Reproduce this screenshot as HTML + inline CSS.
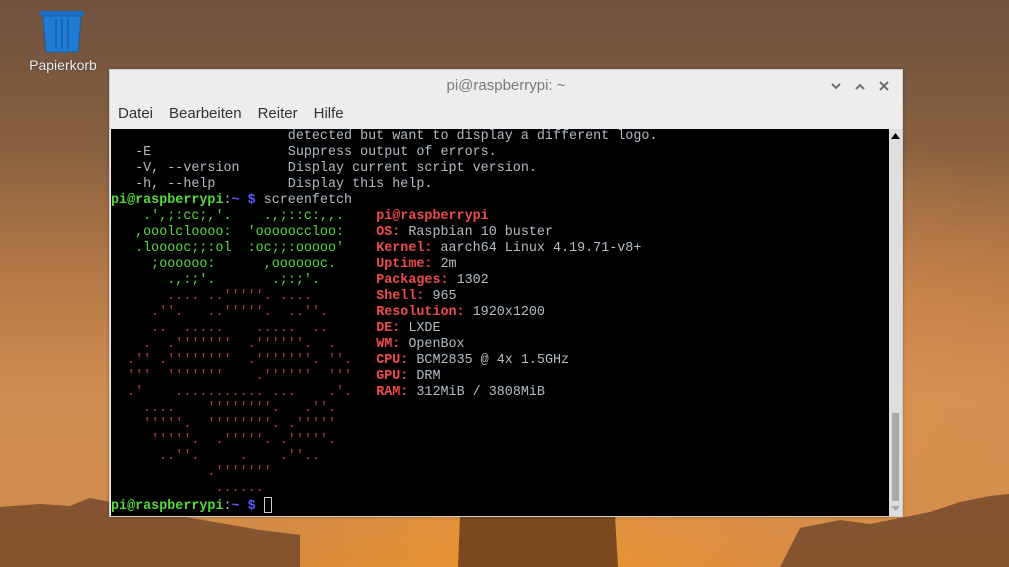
<!DOCTYPE html>
<html><head><meta charset="utf-8"><style>
*{margin:0;padding:0;box-sizing:border-box}
html,body{width:1009px;height:567px;overflow:hidden}
body{position:relative;font-family:"Liberation Sans",sans-serif;
background:
radial-gradient(ellipse 500px 260px at 720px 380px,rgba(235,150,80,.55),rgba(0,0,0,0)),
radial-gradient(ellipse 260px 120px at 530px 567px,rgba(240,150,40,.8),rgba(0,0,0,0)),
linear-gradient(180deg,#6f513f 0%,#86603f 25%,#b77a48 50%,#cf8d52 70%,#d08c4c 88%,#d88a3c 100%);}
.bot{position:absolute;left:0;top:490px}
.trash{position:absolute;left:40px;top:11px}
.lbl{position:absolute;left:20px;top:57px;width:86px;text-align:center;color:#eee;font-size:14px;text-shadow:0 0 2px #333}
.win{position:absolute;left:109px;top:69px;width:794px;height:448px;background:#ededed;border:1px solid #cfcfcf;box-shadow:0 0 3px rgba(0,0,0,.3)}
.title{position:absolute;left:0;right:0;top:7px;text-align:center;color:#7a7a7a;font-size:15px}
.menu{position:absolute;top:35px;left:8px;font-size:15px;color:#333}
.menu span{margin-right:16px}
.term{position:absolute;left:1px;top:59px;width:778px;height:387px;background:#000;overflow:hidden}
pre{font-family:"Liberation Mono",monospace;font-size:13.4px;line-height:16px;color:#b2bcc6;white-space:pre;margin-top:0}
.g{color:#55dc3c;font-weight:bold}.b{color:#5a5aff;font-weight:bold}
.lg{color:#55dc3c}.lr{color:#cc3a3a}.r{color:#ef4b4b;font-weight:bold}
.cur{display:inline-block;width:8px;height:16px;border:1px solid #ccc;vertical-align:-4px}
.sb{position:absolute;left:779px;top:59px;width:13px;height:387px;background:#dedede}
.thumb{position:absolute;left:3px;top:284px;width:7px;height:88px;background:#a8a8a8}
</style></head><body>
<svg class="bot" width="1009" height="77" viewBox="0 0 1009 77">
<path d="M0 17 L40 14 L70 16 L90 8 L110 12 L130 20 L180 26 L220 33 L260 40 L300 45 L300 77 L0 77Z" fill="#7b4e2e" opacity=".9"/>
<path d="M780 77 L800 38 L840 30 L870 34 L900 28 L930 22 L960 12 L990 6 L1009 4 L1009 77Z" fill="#7b4e2e" opacity=".9"/>
<path d="M458 77 L460 26 L470 24 L605 24 L615 26 L618 77Z" fill="#7a4a1e"/>
</svg>
<svg class="trash" width="44" height="42" viewBox="0 0 44 42"><rect x="0" y="0" width="44" height="5" rx="1" fill="#1a6fc4"/><path d="M3 5 L41 5 L38 41 L6 41 Z" fill="#1f7bd4" stroke="#1560a8"/><path d="M16 8v30M22 8v30M28 8v30" stroke="#1560a8" stroke-width="1.5"/></svg>
<div class="lbl">Papierkorb</div>
<div class="win">
<div class="title">pi@raspberrypi: ~</div>
<svg style="position:absolute;left:720px;top:10px" width="60" height="14" viewBox="0 0 60 14"><path d="M2 4l4 4 4-4" stroke="#707070" stroke-width="2" fill="none"/><path d="M26 9l4-4 4 4" stroke="#707070" stroke-width="2" fill="none"/><path d="M50 2l8 8M58 2l-8 8" stroke="#707070" stroke-width="2"/></svg>
<div class="menu"><span>Datei</span><span>Bearbeiten</span><span>Reiter</span><span>Hilfe</span></div>
<div class="term"><pre>                      detected but want to display a different logo.
   -E                 Suppress output of errors.
   -V, --version      Display current script version.
   -h, --help         Display this help.
<span class="g">pi@raspberrypi</span>:<span class="b">~ $</span> screenfetch
<span class="lg">    .',;:cc;,'.    .,;::c:,,.   </span> <span class="r">pi@raspberrypi</span>
<span class="lg">   ,ooolcloooo:  'oooooccloo:   </span> <span class="r">OS:</span> Raspbian 10 buster
<span class="lg">   .looooc;;:ol  :oc;;:ooooo'   </span> <span class="r">Kernel:</span> aarch64 Linux 4.19.71-v8+
<span class="lg">     ;oooooo:      ,ooooooc.    </span> <span class="r">Uptime:</span> 2m
<span class="lg">       .,:;'.       .;:;'.      </span> <span class="r">Packages:</span> 1302
<span class="lr">       .... ..'''''. ....       </span> <span class="r">Shell:</span> 965
<span class="lr">     .''.   ..'''''.  ..''.     </span> <span class="r">Resolution:</span> 1920x1200
<span class="lr">     ..  .....    .....  ..     </span> <span class="r">DE:</span> LXDE
<span class="lr">    .  .'''''''  .''''''.  .    </span> <span class="r">WM:</span> OpenBox
<span class="lr">  .'' .''''''''  .'''''''. ''.  </span> <span class="r">CPU:</span> BCM2835 @ 4x 1.5GHz
<span class="lr">  '''  '''''''    .''''''  '''  </span> <span class="r">GPU:</span> DRM
<span class="lr">  .'    ........... ...    .'.  </span> <span class="r">RAM:</span> 312MiB / 3808MiB
<span class="lr">    ....    ''''''''.   .''.
    '''''.  ''''''''. .'''''
     '''''.  .'''''. .'''''.
      ..''.     .    .''..
            .'''''''
             ......</span>
<span class="g">pi@raspberrypi</span>:<span class="b">~ $</span> <span class="cur"></span></pre></div>
<div class="sb"><svg style="position:absolute;left:2px;top:4px" width="9" height="6"><path d="M0 6L4.5 0 9 6Z" fill="#000"/></svg><div class="thumb"></div><svg style="position:absolute;left:2px;top:377px" width="9" height="5"><path d="M0 0L4.5 5 9 0Z" fill="#aaa"/></svg></div>
</div>
</body></html>
